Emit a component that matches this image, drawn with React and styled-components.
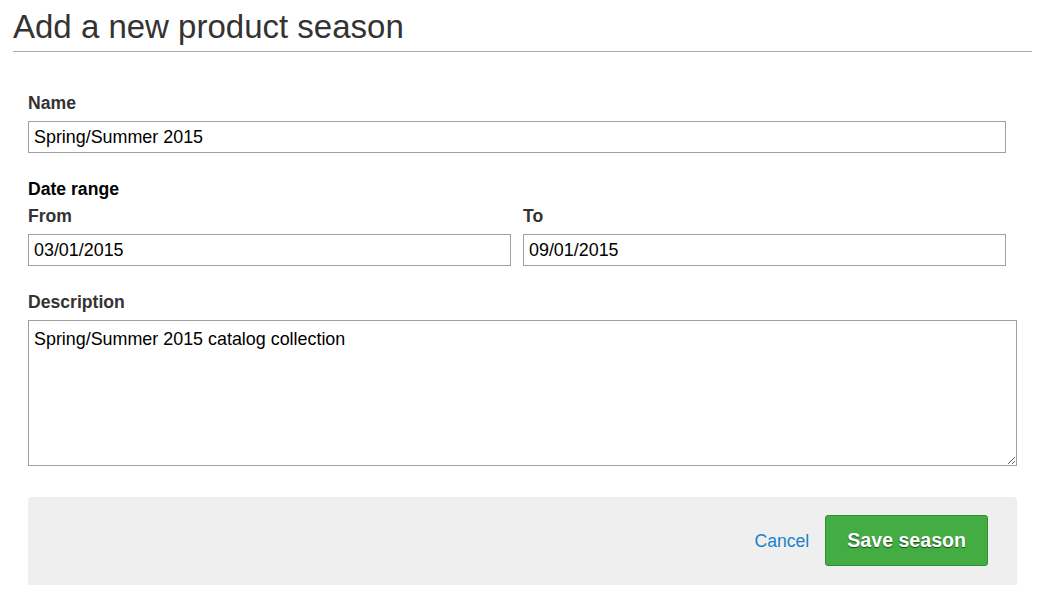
import React from "react";
import styled, { createGlobalStyle } from "styled-components";

const Global = createGlobalStyle`
  html, body { margin: 0; padding: 0; background: #fff; }
  body { font-family: "Liberation Sans", Arial, sans-serif; color: #333; }
  * { box-sizing: border-box; }
`;

const Page = styled.div`
  padding: 0 13px;
`;

const Title = styled.h1`
  margin: 0;
  padding: 8px 0 5px;
  font-size: 33px;
  line-height: 38px;
  font-weight: normal;
  color: #333;
  border-bottom: 1px solid #aaa;
`;

const Form = styled.form`
  padding: 41px 15px 0;
  display: flex;
  flex-direction: column;
`;

const Field = styled.div`
  display: flex;
  flex-direction: column;
  margin-top: ${(p) => p.$top || 0}px;
`;

const Label = styled.label`
  display: block;
  font-size: 17.6px;
  line-height: 20px;
  font-weight: bold;
  color: ${(p) => (p.$dark ? "#000" : "#333")};
  margin-bottom: ${(p) => (p.$gap ?? 8)}px;
`;

const Input = styled.input`
  display: block;
  width: ${(p) => (p.$narrow ? "calc(100% - 11px)" : "100%")};
  height: 32px;
  margin: 0;
  padding: 0 5px;
  border: 1px solid #a0a0a0;
  border-radius: 0;
  font-family: "Liberation Sans", Arial, sans-serif;
  font-size: 17.9px;
  color: #000;
  background: #fff;
  outline: none;
`;

const DateRow = styled.div`
  display: grid;
  grid-template-columns: 1fr 1fr;
  column-gap: 12px;
  width: calc(100% - 11px);
`;

const Col = styled.div`
  display: flex;
  flex-direction: column;
`;

const TextArea = styled.textarea`
  display: block;
  width: 100%;
  height: 146px;
  margin: 0;
  padding: 8px 5px;
  border: 1px solid #a0a0a0;
  border-radius: 0;
  font-family: "Liberation Sans", Arial, sans-serif;
  font-size: 17.9px;
  line-height: 20px;
  color: #000;
  outline: none;
`;

const Footer = styled.div`
  margin-top: 31px;
  height: 88px;
  padding: 18px 29px 19px;
  background: #efefef;
  border-radius: 4px 4px 0 0;
  display: flex;
  justify-content: flex-end;
  align-items: center;
  gap: 16px;
`;

const CancelLink = styled.a`
  font-size: 17.6px;
  color: #1a82c8;
  text-decoration: none;
  cursor: pointer;
  margin-top: 2px;
`;

const SaveButton = styled.button`
  height: 51px;
  padding: 0 21px;
  border: 1px solid #2f8c30;
  border-radius: 3px;
  background: #43ad43;
  color: #fff;
  font-family: "Liberation Sans", Arial, sans-serif;
  font-size: 19.6px;
  font-weight: bold;
  text-shadow: 0 1px 1px rgba(0, 0, 0, 0.6);
  cursor: pointer;
`;

export default function App() {
  return (
    <Page>
      <Global />
      <Title>Add a new product season</Title>
      <Form onSubmit={(e) => e.preventDefault()}>
        <Field>
          <Label htmlFor="name">Name</Label>
          <Input id="name" $narrow defaultValue="Spring/Summer 2015" />
        </Field>
        <Field $top={26}>
          <Label as="div" $dark $gap={7}>Date range</Label>
          <DateRow>
            <Col>
              <Label htmlFor="from">From</Label>
              <Input id="from" defaultValue="03/01/2015" />
            </Col>
            <Col>
              <Label htmlFor="to">To</Label>
              <Input id="to" defaultValue="09/01/2015" />
            </Col>
          </DateRow>
        </Field>
        <Field $top={26}>
          <Label htmlFor="desc">Description</Label>
          <TextArea id="desc" defaultValue="Spring/Summer 2015 catalog collection" />
        </Field>
        <Footer>
          <CancelLink>Cancel</CancelLink>
          <SaveButton type="submit">Save season</SaveButton>
        </Footer>
      </Form>
    </Page>
  );
}
